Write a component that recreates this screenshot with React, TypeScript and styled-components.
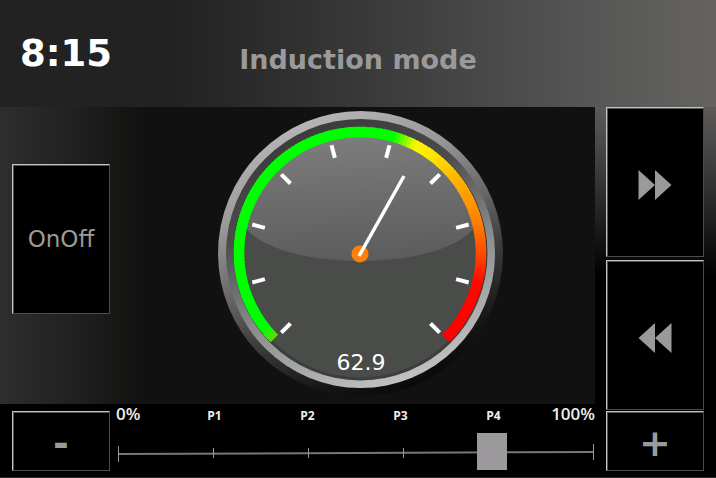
import React, { useState } from 'react';
import styled, { createGlobalStyle } from 'styled-components';

const GlobalStyle = createGlobalStyle`
  * { box-sizing: border-box; }
  body { margin: 0; background: #000; font-family: "DejaVu Sans", Verdana, sans-serif; }
`;

const Screen = styled.div`
  min-height: 100vh;
  display: flex;
  flex-direction: column;
  background: #000;
  border-bottom: 1px solid #2a2a2a;
`;

const Header = styled.header`
  display: grid;
  grid-template-columns: 1fr auto 1fr;
  align-items: center;
  min-height: 107px;
  padding: 0 20px;
  background: linear-gradient(90deg, #222 0%, #222 24%, #2a2a2a 34%, #3a3a3a 52%, #484848 67%, #595958 86%, #656360 100%);
`;

const Clock = styled.time`
  color: #fff;
  font-size: 37px;
  font-weight: bold;
  line-height: 48px;
`;

const Title = styled.h1`
  margin: 0;
  padding-top: 12px;
  color: #9a9a9a;
  font-size: 27px;
  font-weight: bold;
  line-height: 32px;
  white-space: nowrap;
`;

const Body = styled.main`
  flex: 1;
  display: grid;
  grid-template-columns: minmax(0, 1fr) 121px;
`;

const Left = styled.section`
  display: flex;
  flex-direction: column;
`;

const GaugePanel = styled.div`
  flex: 1;
  display: flex;
  align-items: flex-start;
  gap: 15px;
  padding-left: 12px;
  background: linear-gradient(90deg, #2f2e2d 0, #262727 36px, #1e1f1e 84px, #131512 128px, #111 146px);
`;

const GaugeArea = styled.div`
  flex: 1;
  display: flex;
  justify-content: center;
`;

const GaugeSvg = styled.svg`
  display: block;
`;

const Reading = styled.text`
  fill: #fff;
  font-family: "DejaVu Sans", sans-serif;
  font-size: 22px;
  text-anchor: middle;
`;

const Side = styled.nav`
  display: flex;
  flex-direction: column;
  padding: 0 12px 0 11px;
  background: linear-gradient(180deg, #5c5a58 0, #4a4a4a 36px, #2c2c2c 90px, #101010 140px, #000 170px);
`;

const PanelButton = styled.button<{ $h: number; $top?: number; $pad?: number; $size?: number; $bold?: boolean }>`
  display: flex;
  align-items: center;
  justify-content: center;
  flex: none;
  width: 98px;
  height: ${p => p.$h}px;
  margin: ${p => p.$top ?? 0}px 0 0;
  padding: ${p => p.$pad ?? 0}px 0 0;
  border: 1px solid;
  border-color: #c4c4c4 #4c4c4c #4c4c4c #c4c4c4;
  box-shadow: inset 1px 1px #555;
  background: #000;
  color: #9a9a9a;
  font-family: inherit;
  font-size: ${p => p.$size ?? 23}px;
  font-weight: ${p => (p.$bold ? 'bold' : 'normal')};
  line-height: 1;
  cursor: pointer;
`;

const PowerBar = styled.footer`
  display: flex;
  gap: 6px;
  height: 73px;
  padding-left: 12px;
  background: #000;
`;

const Scale = styled.div`
  flex: 1;
  min-width: 0;
`;

const Labels = styled.div`
  display: grid;
  grid-template-columns: 52fr 93fr 93fr 93fr 93fr 55fr;
  height: 20px;
  color: #eee;
  font-family: "Open Sans", "Noto Sans", sans-serif;
  line-height: 20px;
`;

const EndLabel = styled.span<{ $right?: boolean }>`
  font-size: 17px;
  font-weight: 600;
  text-align: ${p => (p.$right ? 'right' : 'left')};
`;

const PresetLabel = styled.span`
  font-size: 12px;
  font-weight: bold;
  line-height: 24px;
  text-align: center;
`;

const SliderBox = styled.div`
  display: grid;
  align-items: center;
  height: 52px;
  padding: 6px 0 0 1px;
  > * { grid-area: 1 / 1; }
`;

const ScaleLine = styled.svg`
  display: block;
  width: 100%;
  height: 20px;
`;

const Slider = styled.input`
  appearance: none;
  width: 100%;
  height: 38px;
  margin: 0;
  background: transparent;
  &::-webkit-slider-runnable-track { height: 38px; background: transparent; }
  &::-webkit-slider-thumb {
    appearance: none;
    width: 30px;
    height: 37px;
    border: 0;
    border-radius: 0;
    background: #9b999b;
    transform: translateY(-1px);
  }
`;

type Stop = [number, number, number, number];
const stops: Stop[] = [
  [-135, 90, 225, 0],
  [-128, 0, 255, 0],
  [16, 0, 255, 0],
  [27, 250, 245, 0],
  [36, 255, 230, 0],
  [54, 255, 176, 0],
  [76, 255, 125, 0],
  [91, 255, 70, 0],
  [104, 255, 8, 0],
  [135, 255, 0, 0],
];

function colorAt(angle: number) {
  const i = Math.max(1, stops.findIndex(s => s[0] >= angle));
  const a = stops[i - 1];
  const b = stops[i];
  const t = (angle - a[0]) / (b[0] - a[0]);
  const mix = (k: 1 | 2 | 3) => Math.round(a[k] + (b[k] - a[k]) * t);
  return `rgb(${mix(1)},${mix(2)},${mix(3)})`;
}

function point(cx: number, cy: number, r: number, deg: number) {
  const a = (deg * Math.PI) / 180;
  return [cx + r * Math.sin(a), cy - r * Math.cos(a)];
}

const arcPieces = Array.from({ length: 135 }, (_, i) => {
  const from = -135 + i * 2;
  const to = Math.min(135, from + 3);
  const [x1, y1] = point(145, 146, 121, from);
  const [x2, y2] = point(145, 146, 121, to);
  return { d: `M${x1} ${y1}A121 121 0 0 1 ${x2} ${y2}`, color: colorAt(from + 1) };
});

const ticks = Array.from({ length: 10 }, (_, i) => -135 + i * 30);

function Gauge({ value }: { value: number }) {
  return (
    <GaugeSvg width="290" height="296" viewBox="0 0 290 296" role="img" aria-label={`Power ${value}`}>
      <defs>
        <linearGradient id="rim" x1="0.3" y1="0" x2="0.72" y2="1">
          <stop offset="0" stopColor="#bab8b8" />
          <stop offset="0.25" stopColor="#9a9898" />
          <stop offset="0.45" stopColor="#6b6b6b" />
          <stop offset="0.64" stopColor="#3d3d3d" />
          <stop offset="0.85" stopColor="#161616" />
          <stop offset="1" stopColor="#050505" />
        </linearGradient>
        <linearGradient id="bevel" x1="0.3" y1="0" x2="0.7" y2="1">
          <stop offset="0" stopColor="#3a3a3a" />
          <stop offset="0.3" stopColor="#4c4c4c" />
          <stop offset="0.6" stopColor="#8a8c8c" />
          <stop offset="1" stopColor="#c6c6c6" />
        </linearGradient>
        <linearGradient id="gloss" x1="0.45" y1="0" x2="0.55" y2="1">
          <stop offset="0" stopColor="#7e7d7f" />
          <stop offset="0.5" stopColor="#6d6c6d" />
          <stop offset="1" stopColor="#5c5b5d" />
        </linearGradient>
      </defs>
      <circle cx="145.5" cy="146.5" r="142.5" fill="url(#rim)" />
      <circle cx="145.5" cy="146.5" r="134.5" fill="url(#bevel)" />
      <circle cx="145.5" cy="146.5" r="127" fill="#3c3e3b" />
      <circle cx="145.5" cy="146.5" r="124" fill="#4a4c49" />
      <path d="M28 115A118 45 0 0 0 262 115A121 121 0 0 0 28 115Z" fill="url(#gloss)" />
      {arcPieces.map(p => (
        <path key={p.d} d={p.d} fill="none" stroke={p.color} strokeWidth="10.500" />
      ))}
      {ticks.map(t => {
        const [x1, y1] = point(145.5, 146.5, 99, t);
        const [x2, y2] = point(145.5, 146.5, 112, t);
        return <line key={t} x1={x1} y1={y1} x2={x2} y2={y2} stroke="#fff" strokeWidth="4" />;
      })}
      <circle cx="145" cy="147" r="8.5" fill="#ff7f0c" />
      <line x1="144" y1="149" x2="189" y2="69" stroke="#fff" strokeWidth="3.500" />
      <Reading x="146" y="263">{value}</Reading>
    </GaugeSvg>
  );
}

const Arrows = ({ back }: { back?: boolean }) => (
  <svg width="34" height="30" viewBox="0 0 34 30" fill="#9b999b" aria-hidden="true">
    {back ? <path d="M17 0v30L.5 15ZM33.500 0v30L17 15Z" /> : <path d="M.5 0v30L17 15ZM17 0v30L33.500 15Z" />}
  </svg>
);

export default function App() {
  const [power, setPower] = useState(80.4);
  return (
    <>
      <GlobalStyle />
      <Screen>
        <Header>
          <Clock>8:15</Clock>
          <Title>Induction mode</Title>
        </Header>
        <Body>
          <Left>
            <GaugePanel>
              <PanelButton $h={150} $top={57}>OnOff</PanelButton>
              <GaugeArea>
                <Gauge value={62.9} />
              </GaugeArea>
            </GaugePanel>
            <PowerBar>
              <PanelButton $h={60} $top={7} $pad={4} $size={38} $bold aria-label="Decrease power">-</PanelButton>
              <Scale>
                <Labels>
                  <EndLabel>0%</EndLabel>
                  <PresetLabel>P1</PresetLabel>
                  <PresetLabel>P2</PresetLabel>
                  <PresetLabel>P3</PresetLabel>
                  <PresetLabel>P4</PresetLabel>
                  <EndLabel $right>100%</EndLabel>
                </Labels>
                <SliderBox>
                  <ScaleLine viewBox="0 0 478 20" preserveAspectRatio="none" stroke="#999" fill="none" aria-hidden="true">
                    <path d="M1 11L477 9" stroke="#777" strokeWidth="2" />
                    <path d="M1.500 3V19M96.500 5V15M191.500 5V15M286.500 5V15M476.500 1V17" />
                  </ScaleLine>
                  <Slider
                    type="range"
                    min={0}
                    max={100}
                    step={0.1}
                    value={power}
                    aria-label="Power level"
                    onChange={e => setPower(Number(e.target.value))}
                  />
                </SliderBox>
              </Scale>
            </PowerBar>
          </Left>
          <Side>
            <PanelButton $h={150} $pad={6} aria-label="Next mode"><Arrows /></PanelButton>
            <PanelButton $h={150} $top={3} $pad={6} aria-label="Previous mode"><Arrows back /></PanelButton>
            <PanelButton $h={60} $top={1} $pad={4} $size={38} $bold aria-label="Increase power">+</PanelButton>
          </Side>
        </Body>
      </Screen>
    </>
  );
}
